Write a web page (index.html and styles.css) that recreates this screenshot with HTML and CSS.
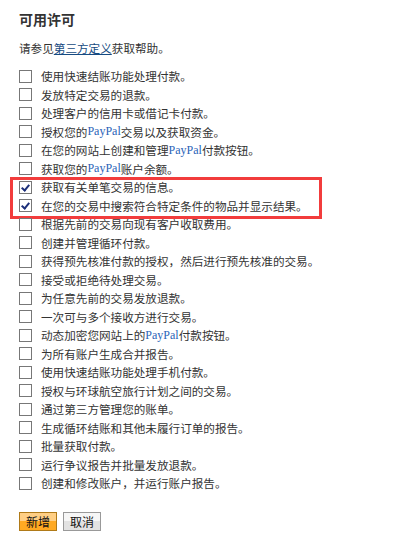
FILE: index.html
```html
<!DOCTYPE html>
<html lang="zh-CN">
<head>
  <meta charset="UTF-8">
  <title>可用许可</title>
  <link rel="stylesheet" href="styles.css">
</head>
<body>
  <h2 class="title">可用许可</h2>
  <p class="intro">请参见<a href="#">第三方定义</a>获取帮助。</p>

  <ul class="perms">
    <li><span class="box"></span>使用快速结账功能处理付款。</li>
    <li><span class="box"></span>发放特定交易的退款。</li>
    <li><span class="box"></span>处理客户的信用卡或借记卡付款。</li>
    <li><span class="box"></span>授权您的<span class="pp">PayPal</span>交易以及获取资金。</li>
    <li><span class="box"></span>在您的网站上创建和管理<span class="pp">PayPal</span>付款按钮。</li>
    <li><span class="box"></span>获取您的<span class="pp">PayPal</span>账户余额。</li>
    <li class="hl-start"><span class="box checked"></span>获取有关单笔交易的信息。</li>
    <li><span class="box checked"></span>在您的交易中搜索符合特定条件的物品并显示结果。</li>
    <li><span class="box"></span>根据先前的交易向现有客户收取费用。</li>
    <li><span class="box"></span>创建并管理循环付款。</li>
    <li><span class="box"></span>获得预先核准付款的授权，然后进行预先核准的交易。</li>
    <li><span class="box"></span>接受或拒绝待处理交易。</li>
    <li><span class="box"></span>为任意先前的交易发放退款。</li>
    <li><span class="box"></span>一次可与多个接收方进行交易。</li>
    <li><span class="box"></span>动态加密您网站上的<span class="pp">PayPal</span>付款按钮。</li>
    <li><span class="box"></span>为所有账户生成合并报告。</li>
    <li><span class="box"></span>使用快速结账功能处理手机付款。</li>
    <li><span class="box"></span>授权与环球航空旅行计划之间的交易。</li>
    <li><span class="box"></span>通过第三方管理您的账单。</li>
    <li><span class="box"></span>生成循环结账和其他未履行订单的报告。</li>
    <li><span class="box"></span>批量获取付款。</li>
    <li><span class="box"></span>运行争议报告并批量发放退款。</li>
    <li><span class="box"></span>创建和修改账户，并运行账户报告。</li>
  </ul>

  <div class="actions">
    <button class="btn btn-primary">新增</button>
    <button class="btn">取消</button>
  </div>
</body>
</html>
```

FILE: styles.css
```css
body {
  margin: 0;
  padding: 11px 19px 0;
  font-family: "Noto Sans CJK SC", "Liberation Sans", sans-serif;
  font-size: 11.6px;
  color: #333;
  background: #fff;
}
.title {
  margin: 0;
  font-size: 14px;
  font-weight: bold;
  line-height: 16px;
  color: #333;
}
.intro {
  margin: 14px 0 11px;
  line-height: 15px;
}
.intro a {
  color: #164b82;
  text-decoration: underline;
}
.perms {
  list-style: none;
  margin: 0;
  padding: 0;
  position: relative;
}
.perms li {
  display: flex;
  align-items: center;
  height: 18.5px;
  white-space: nowrap;
}
.box {
  width: 11px;
  height: 11px;
  border: 1px solid #777;
  background: #fff;
  margin-right: 9px;
  flex: none;
  position: relative;
}
.box.checked:after {
  content: "";
  position: absolute;
  left: 3px;
  top: 1px;
  width: 3px;
  height: 6px;
  border: solid #1c2f7a;
  border-width: 0 2px 2px 0;
  transform: rotate(40deg);
}
.pp {
  font-family: "Liberation Serif", serif;
  color: #2a64b8;
  font-size: 12px;
}
.hl-start {
  position: relative;
}
.hl-start:before {
  content: "";
  position: absolute;
  left: -9px;
  top: -1px;
  width: 306px;
  height: 36px;
  border: 3px solid #f23c3c;
}
.actions {
  margin-top: 19px;
  display: flex;
  gap: 6px;
}
.btn {
  font-family: "Noto Sans CJK SC", sans-serif;
  font-size: 12px;
  color: #111;
  height: 19px;
  padding: 0 6px;
  line-height: 15px;
  border: 1px solid #999;
  border-radius: 0;
  background: linear-gradient(#f6f6f6 50%, #e2e2e2 50%);
}
.btn-primary {
  border-color: #b07a18;
  background: linear-gradient(#ffcf85 50%, #ffa922 50%);
}
```
